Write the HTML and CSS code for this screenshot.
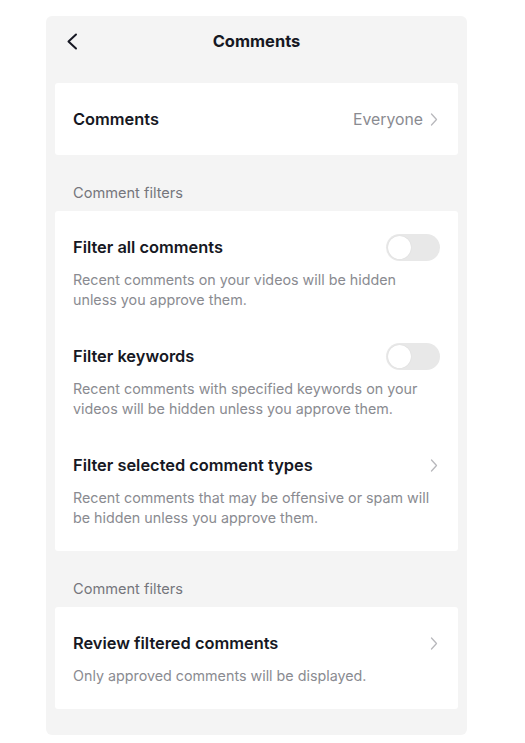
FILE: index.html
```html
<!DOCTYPE html>
<html lang="en">
<head>
    <meta charset="UTF-8">
    <meta name="viewport" content="width=device-width, initial-scale=1.0">
    <title>Comments</title>
    <link rel="stylesheet" href="styles.css">
</head>
<body>
    <div class="screen">
        <div class="header">
            <span class="back">
                <svg width="12" height="17" viewBox="0 0 12 17"><path d="M10 1.5 L2.5 8.5 L10 15.5" fill="none" stroke="#161823" stroke-width="2" stroke-linecap="round" stroke-linejoin="round"/></svg>
            </span>
            <h1>Comments</h1>
        </div>

        <div class="card card-single">
            <span class="title">Comments</span>
            <span class="value">Everyone
                <svg class="chev" width="8" height="13" viewBox="0 0 8 13"><path d="M1.5 1 L6.5 6.5 L1.5 12" fill="none" stroke="#b8b8bc" stroke-width="1.3" stroke-linecap="round" stroke-linejoin="round"/></svg>
            </span>
        </div>

        <div class="section-label">Comment filters</div>
        <div class="card">
            <div class="item">
                <div class="item-head">
                    <span class="title">Filter all comments</span>
                    <span class="toggle"><span class="knob"></span></span>
                </div>
                <p class="desc">Recent comments on your videos will be hidden unless you approve them.</p>
            </div>
            <div class="item">
                <div class="item-head">
                    <span class="title">Filter keywords</span>
                    <span class="toggle"><span class="knob"></span></span>
                </div>
                <p class="desc">Recent comments with specified keywords on your videos will be hidden unless you approve them.</p>
            </div>
            <div class="item">
                <div class="item-head">
                    <span class="title">Filter selected comment types</span>
                    <svg class="chev" width="8" height="13" viewBox="0 0 8 13"><path d="M1.5 1 L6.5 6.5 L1.5 12" fill="none" stroke="#b8b8bc" stroke-width="1.3" stroke-linecap="round" stroke-linejoin="round"/></svg>
                </div>
                <p class="desc">Recent comments that may be offensive or spam will be hidden unless you approve them.</p>
            </div>
        </div>

        <div class="section-label">Comment filters</div>
        <div class="card">
            <div class="item">
                <div class="item-head">
                    <span class="title">Review filtered comments</span>
                    <svg class="chev" width="8" height="13" viewBox="0 0 8 13"><path d="M1.5 1 L6.5 6.5 L1.5 12" fill="none" stroke="#b8b8bc" stroke-width="1.3" stroke-linecap="round" stroke-linejoin="round"/></svg>
                </div>
                <p class="desc">Only approved comments will be displayed.</p>
            </div>
        </div>
    </div>
</body>
</html>
```

FILE: styles.css
```css
body {
    margin: 0;
    background: #fff;
    font-family: 'Inter', 'Liberation Sans', Arial, sans-serif;
    color: #161823;
}
.screen {
    width: 403px;
    margin: 16px 0 0 46px;
    padding: 0 9px 26px;
    background: #f4f4f4;
    border-radius: 6px;
}
.header {
    position: relative;
    height: 50px;
    display: flex;
    align-items: center;
    justify-content: center;
    margin-bottom: 17px;
}
.back {
    position: absolute;
    left: 11px;
    top: 17px;
}
.header h1 {
    margin: 0;
    font-size: 16.5px;
    font-weight: 700;
}
.card {
    background: #fff;
    border-radius: 3px;
    padding: 25px 20px 23px 18px;
}
.card-single {
    height: 72px;
    padding: 0 20px 0 18px;
    box-sizing: border-box;
    display: flex;
    align-items: center;
    justify-content: space-between;
}
.title {
    font-size: 16.4px;
    font-weight: 600;
    line-height: 22px;
}
.value {
    font-size: 15.8px;
    color: #8a8b91;
    display: flex;
    align-items: center;
    gap: 7px;
}
.section-label {
    font-size: 14.6px;
    color: #75767c;
    line-height: 20px;
    padding: 28px 0 8px 18px;
}
.item + .item {
    margin-top: 35px;
}
.item-head {
    display: flex;
    align-items: center;
    justify-content: space-between;
    height: 22px;
}
.desc {
    margin: 12px 0 0;
    font-size: 14.3px;
    line-height: 20px;
    color: #8a8b91;
}
.toggle {
    width: 54px;
    height: 27px;
    border-radius: 14px;
    background: #e8e8e8;
    position: relative;
    margin-right: -2px;
}
.knob {
    position: absolute;
    left: 2px;
    top: 2px;
    width: 23px;
    height: 23px;
    border-radius: 50%;
    background: #fff;
    box-shadow: 0 0 1px rgba(0, 0, 0, 0.15);
}
```
